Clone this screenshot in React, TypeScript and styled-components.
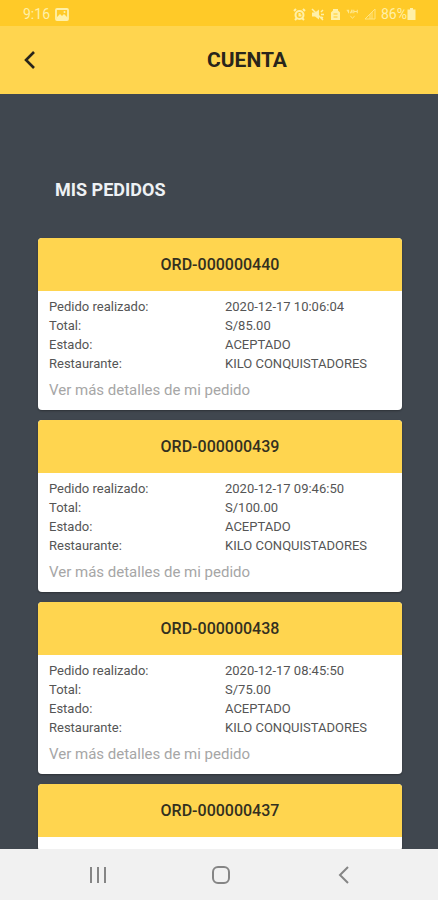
import React from "react";
import styled, { createGlobalStyle } from "styled-components";

const GlobalStyle = createGlobalStyle`
  * { box-sizing: border-box; }
  body { margin: 0; background: #40474f; font-family: Roboto, "Liberation Sans", sans-serif; }
  button { border: 0; padding: 0; background: none; font: inherit; cursor: pointer; }
  h1, h2, h3, dl, dd, dt { margin: 0; }
`;

const Screen = styled.div`
  display: flex;
  flex-direction: column;
  height: 100vh;
  background: #40474f;
`;

const StatusBar = styled.div`
  flex: none;
  display: flex;
  align-items: center;
  justify-content: space-between;
  height: 26px;
  padding: 2px 22px 0 23px;
  background: #ffca28;
  color: #fff0a8;
  font-size: 14px;
`;

const StatusGroup = styled.div`
  display: flex;
  align-items: center;
  gap: 5px;
`;

const BatteryGroup = styled(StatusGroup)`
  gap: 0;
`;

const Header = styled.header`
  flex: none;
  display: grid;
  grid-template-columns: 56px 1fr 0;
  align-items: center;
  height: 68px;
  background: #ffd54f;
  color: #29251b;
`;

const BackButton = styled.button`
  display: flex;
  align-items: center;
  height: 48px;
  padding-left: 23px;
  color: inherit;
`;

const Title = styled.h1`
  text-align: center;
  font-size: 21px;
  line-height: 24px;
  font-weight: 700;
`;

const Content = styled.main`
  flex: 1;
  min-height: 0;
  overflow: hidden;
  padding: 84px 36px 0 38px;
`;

const SectionTitle = styled.h2`
  padding: 0 17px;
  color: #eef1f4;
  font-size: 18px;
  line-height: 24px;
  font-weight: 700;
`;

const Orders = styled.div`
  display: flex;
  flex-direction: column;
  gap: 10px;
  margin-top: 36px;
`;

const Card = styled.article`
  flex: none;
  overflow: hidden;
  border-radius: 4px;
  background: #fff;
  box-shadow: 0 1px 2px rgba(0, 0, 0, 0.3);
`;

const CardTitle = styled.h3`
  background: #ffd54f;
  color: #33301f;
  text-align: center;
  font-size: 16px;
  line-height: 53px;
  font-weight: 500;
`;

const CardBody = styled.div`
  padding: 6px 11px 8px;
`;

const Details = styled.dl`
  display: grid;
  grid-template-columns: 1fr 1fr;
  column-gap: 10px;
  color: #555;
  font-size: 13px;
  line-height: 19px;
  white-space: nowrap;
`;

const MoreLink = styled.a`
  display: block;
  padding-top: 5px;
  color: #a6a6a6;
  font-size: 15px;
  line-height: 24px;
  text-decoration: none;
`;

const NavBar = styled.nav`
  flex: none;
  display: flex;
  align-items: center;
  justify-content: center;
  gap: 75px;
  height: 51px;
  padding-left: 3px;
  background: #f1f1f1;
  color: #858585;
`;

const NavButton = styled.button`
  display: flex;
  align-items: center;
  justify-content: center;
  width: 48px;
  height: 48px;
  color: inherit;
`;

const PictureIcon = () => (
  <svg width="14" height="13" viewBox="0 0 14 13">
    <rect x="1" y="1" width="12" height="11" rx="1" fill="none" stroke="currentColor" strokeWidth="1.8" />
    <path d="M2 11V9l3-3 2 2 2-2 4 4v1z" fill="currentColor" />
    <circle cx="9.500" cy="4" r="1" fill="currentColor" />
  </svg>
);

const AlarmIcon = () => (
  <svg width="13" height="13" viewBox="0 0 13 13" fill="none" stroke="currentColor" strokeWidth="2">
    <circle cx="6.500" cy="7" r="4" />
    <path d="M1 3l2-2M12 3l-2-2M2 12l2-2M11 12l-2-2M6.500 5v2.500h2" />
  </svg>
);

const MuteIcon = () => (
  <svg width="14" height="13" viewBox="0 0 14 13">
    <path d="M1 4.500h3L8 1.500v10l-4-3H1z" fill="currentColor" />
    <path d="M1 1l11 11M10 4l2-2M10 6.500h3M10 9l2 1" fill="none" stroke="currentColor" strokeWidth="1.5" />
  </svg>
);

const SaverIcon = () => (
  <svg width="11" height="13" viewBox="0 0 11 13">
    <path d="M3 1h5v1.500l2 2V12H1V4.500l2-2z" fill="currentColor" />
    <path d="M3.500 6h4M3.500 9h4" stroke="#ffca28" />
  </svg>
);

const NetworkIcon = () => (
  <svg width="13" height="13" viewBox="0 0 15 13" fill="none" stroke="currentColor" opacity="0.8">
    <path d="M1 1L3 4M3 1v4M5 5l2-4v4M9 1v4M9 3h4M13 1v4" strokeWidth="1.2" />
    <path d="M5 8l2.500 3L10 8" />
  </svg>
);

const SignalIcon = () => (
  <svg width="12" height="12" viewBox="0 0 12 12" fill="none" stroke="currentColor" opacity="0.7">
    <path d="M1 11h10V1zM6 6v5M8 4v7" />
  </svg>
);

const BatteryIcon = () => (
  <svg width="9" height="12" viewBox="0 0 9 12" fill="currentColor">
    <path d="M3 0h3v1.500h2.500V12h-8V1.500H3z" />
  </svg>
);

const orders = [
  { id: "ORD-000000440", date: "2020-12-17 10:06:04", total: "S/85.00" },
  { id: "ORD-000000439", date: "2020-12-17 09:46:50", total: "S/100.00" },
  { id: "ORD-000000438", date: "2020-12-17 08:45:50", total: "S/75.00" },
  { id: "ORD-000000437", date: "", total: "" },
];

export default function App() {
  return (
    <Screen>
      <GlobalStyle />
      <StatusBar>
        <StatusGroup>
          <span>9:16</span>
          <PictureIcon />
        </StatusGroup>
        <StatusGroup>
          <AlarmIcon />
          <MuteIcon />
          <SaverIcon />
          <NetworkIcon />
          <SignalIcon />
          <BatteryGroup>
            <span>86%</span>
            <BatteryIcon />
          </BatteryGroup>
        </StatusGroup>
      </StatusBar>
      <Header>
        <BackButton aria-label="Volver">
          <svg width="14" height="20" viewBox="0 0 14 20" fill="none" stroke="currentColor" strokeWidth="2.6">
            <path d="M11 2L3 10l8 8" />
          </svg>
        </BackButton>
        <Title>CUENTA</Title>
      </Header>
      <Content>
        <SectionTitle>MIS PEDIDOS</SectionTitle>
        <Orders>
          {orders.map((order) => (
            <Card key={order.id}>
              <CardTitle>{order.id}</CardTitle>
              <CardBody>
                {order.date && (
                  <Details>
                    <dt>Pedido realizado:</dt>
                    <dd>{order.date}</dd>
                    <dt>Total:</dt>
                    <dd>{order.total}</dd>
                    <dt>Estado:</dt>
                    <dd>ACEPTADO</dd>
                    <dt>Restaurante:</dt>
                    <dd>KILO CONQUISTADORES</dd>
                  </Details>
                )}
                {order.date && <MoreLink href="#">Ver más detalles de mi pedido</MoreLink>}
              </CardBody>
            </Card>
          ))}
        </Orders>
      </Content>
      <NavBar>
        <NavButton aria-label="Recientes">
          <svg width="18" height="18" viewBox="0 0 18 18" fill="none" stroke="currentColor" strokeWidth="2">
            <path d="M2 1v16M9 1v16M16 1v16" />
          </svg>
        </NavButton>
        <NavButton aria-label="Inicio">
          <svg width="20" height="20" viewBox="0 0 20 20" fill="none" stroke="currentColor" strokeWidth="2">
            <rect x="2" y="2" width="16" height="16" rx="5" />
          </svg>
        </NavButton>
        <NavButton aria-label="Atrás">
          <svg width="12" height="18" viewBox="0 0 12 18" fill="none" stroke="currentColor" strokeWidth="2">
            <path d="M10 1L2 9l8 8" />
          </svg>
        </NavButton>
      </NavBar>
    </Screen>
  );
}
